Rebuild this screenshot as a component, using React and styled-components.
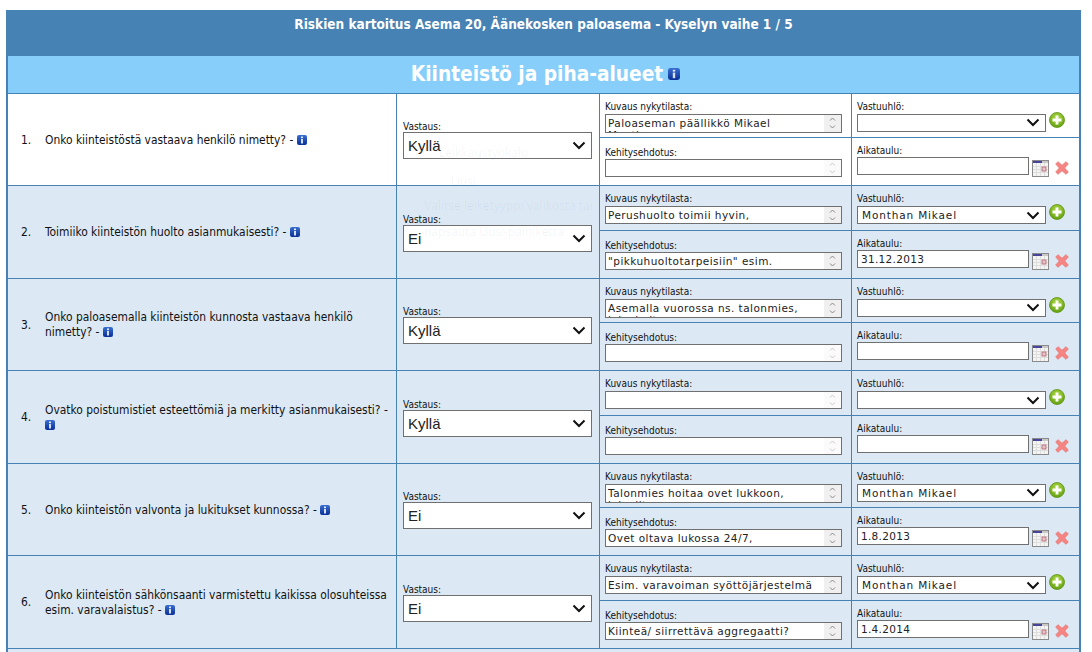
import React from 'react';
import styled, {createGlobalStyle} from 'styled-components';

const LINE = '#4682b4';
const CHEVRON = `url("data:image/svg+xml,%3Csvg xmlns='http://www.w3.org/2000/svg' width='14' height='9'%3E%3Cpath d='M1.5 1.5 7 7l5.5-5.5' fill='none' stroke='%23111' stroke-width='2'/%3E%3C/svg%3E")`;

const GlobalStyle = createGlobalStyle`
  html, body {
    margin: 0;
    height: 652px;
    overflow: hidden;
    background: #fff;
  }
  body {
    font-family: "DejaVu Sans", Verdana, sans-serif;
    font-stretch: condensed;
    color: #111;
  }
`;

// Page frame //
const Page = styled.div`
  position: relative;
  width: 1075px;
  height: 642px;
  overflow: hidden;
  margin: 10px 0 0 6px;
`;

const Header = styled.header`
  height: 46px;
  box-sizing: border-box;
  padding-top: 6px;
  background: ${LINE};
  color: #fff;
  font-size: 13.5px;
  font-weight: 700;
  line-height: 17px;
  text-align: center;
`;

const SectionTitle = styled.h1`
  display: flex;
  align-items: center;
  justify-content: center;
  gap: 5px;
  margin: 0;
  height: 37.5px;
  padding-left: 4px;
  box-sizing: border-box;
  border: solid ${LINE};
  border-width: 0 2px 1px 2px;
  background: #87cefa;
  color: #fff;
  font-size: 20.7px;
  font-weight: 700;
`;

const Table = styled.div`
  border: solid ${LINE};
  border-width: 0 2px;
`;

// Question row //
const Row = styled.section`
  display: grid;
  grid-template-columns: 388px 203px 252px 1fr;
  height: 92.5px;
  box-sizing: border-box;
  border-bottom: 1px solid ${LINE};
  background: ${(p) => (p.$white ? '#fff' : '#dce9f5')};
`;

const Question = styled.div`
  display: flex;
  align-items: center;
  padding: 2px 5px 0 13px;
  font-size: 11.9px;
  line-height: 15px;
`;

const Number = styled.span`
  flex: 0 0 24px;
`;

const AnswerCell = styled.div`
  display: flex;
  flex-direction: column;
  justify-content: center;
  padding: 2px 6px 0 6px;
  border-left: 1px solid ${LINE};
`;

const Stack = styled.div`
  display: grid;
  grid-template-rows: 43.5px 1fr;
  border-left: 1px solid ${LINE};
`;

const SubCell = styled.div`
  padding: ${(p) => p.$top}px 5px 0;
  border-top: ${(p) => (p.$lower ? `1px solid ${LINE}` : '0')};
  box-sizing: border-box;
`;

const Label = styled.label`
  display: block;
  font-size: 10px;
  line-height: ${(p) => p.$line || 13}px;
  margin: 0 0 ${(p) => p.$gap || 0}px;
`;

const BigSelect = styled.select`
  appearance: none;
  width: 189px;
  height: 27px;
  box-sizing: border-box;
  padding: 0 0 0 4px;
  border: 1px solid #707070;
  border-radius: 0;
  background: #fff ${CHEVRON} no-repeat right 5px center;
  font-family: "Liberation Sans", Arial, sans-serif;
  font-size: 15px;
  color: #222;
`;

const SmallSelect = styled.select`
  appearance: none;
  width: 189px;
  height: 18px;
  box-sizing: border-box;
  padding: 0 0 0 4px;
  border: 1px solid #707070;
  border-radius: 0;
  background: #fff ${CHEVRON} no-repeat right 5px center;
  font-family: "DejaVu Sans", Verdana, sans-serif;
  font-size: 10.5px;
  letter-spacing: 0.85px;
  color: #222;
`;

const Inline = styled.div`
  display: flex;
  align-items: flex-start;
  gap: 3px;
`;

const TextBox = styled.div`
  display: flex;
  width: 237px;
  height: ${(p) => (p.$tall ? 19 : 18)}px;
  box-sizing: border-box;
  border: 1px solid #707070;
  background: #fff;
`;

const TextArea = styled.textarea`
  flex: 1;
  min-width: 0;
  margin: 0;
  padding: 2px 2px 0;
  border: 0;
  outline: 0;
  resize: none;
  overflow: hidden;
  background: transparent;
  font-family: "DejaVu Sans", Verdana, sans-serif;
  font-size: 10.5px;
  line-height: 12px;
  letter-spacing: 0.45px;
  color: #222;
`;

const Spinner = styled.div`
  display: flex;
  flex-direction: column;
  align-items: center;
  justify-content: center;
  gap: 4px;
  flex: 0 0 17px;
  background: ${(p) => (p.$off ? '#f8f8f8' : '#f0f0f0')};
  opacity: ${(p) => (p.$off ? 0.45 : 1)};
`;

const DateInput = styled.input`
  width: 172px;
  height: 18px;
  box-sizing: border-box;
  margin: 0;
  padding: 0 3px;
  border: 1px solid #707070;
  border-radius: 0;
  background: #fff;
  font-family: "DejaVu Sans", Verdana, sans-serif;
  font-size: 10.5px;
  letter-spacing: 0.3px;
  color: #222;
`;

const RemoveIcon = styled.svg`
  margin: 4px 0 0 3px;
`;

const CalendarIcon = styled.svg`
  margin-top: 3px;
`;

const PlusIcon = styled.svg`
  margin-top: -2px;
  flex: none;
`;

const Info = styled.svg`
  vertical-align: -1px;
`;

// Faded window that is left over the page in the picture //
const Ghost = styled.div`
  position: absolute;
  left: ${(p) => p.$x}px;
  top: ${(p) => p.$y}px;
  font-family: "Open Sans", sans-serif;
  font-stretch: normal;
  font-size: 12px;
  line-height: 11px;
  white-space: nowrap;
  color: rgba(20, 40, 70, 0.06);
  pointer-events: none;
`;

const InfoIcon = ({size = 10}) => (
  <Info width={size} height={size} viewBox="0 0 10 10">
    <defs>
      <linearGradient id="infoBlue" x1="0" y1="0" x2="0" y2="1">
        <stop offset="0" stopColor="#3a6fd0"/>
        <stop offset="1" stopColor="#0a2f96"/>
      </linearGradient>
    </defs>
    <rect x="0" y="0" width="10" height="10" rx="2" fill="url(#infoBlue)"/>
    <rect x="4" y="1.5" width="2" height="1.5" fill="#e4ecfb"/>
    <rect x="4" y="3.8" width="2" height="4.7" fill="#d5e0f7"/>
  </Info>
);

const SpinUp = () => (
  <svg width="7" height="4"><path d="M1 3.5 3.5 1 6 3.5" fill="none" stroke="#888"/></svg>
);

const SpinDown = () => (
  <svg width="7" height="4"><path d="M1 .5 3.5 3 6 .5" fill="none" stroke="#888"/></svg>
);

const Plus = () => (
  <PlusIcon width="16" height="16" viewBox="0 0 16 16">
    <defs>
      <radialGradient id="plusGreen" cx="0.5" cy="0.35" r="0.7">
        <stop offset="0" stopColor="#b5dc4a"/>
        <stop offset="1" stopColor="#5a9a0c"/>
      </radialGradient>
    </defs>
    <circle cx="8" cy="8" r="7.5" fill="url(#plusGreen)" stroke="#5f9414" strokeWidth="0.8"/>
    <path d="M6.6 3.5h2.8v3.1h3.1v2.8H9.4v3.1H6.6V9.4H3.5V6.6h3.1z" fill="#fff"/>
  </PlusIcon>
);

const Calendar = () => (
  <CalendarIcon width="17" height="17" viewBox="0 0 17 17">
    <rect x="0.5" y="0.5" width="16" height="16" fill="#f4f4f2" stroke="#8a8a8a"/>
    <rect x="1" y="1" width="15" height="2" fill="#c9c9c9"/>
    <rect x="1" y="1" width="9" height="2" fill="#46459a"/>
    <path d="M1 6.5h15M1 9.5h15M1 12.5h15M4.5 3v13M8.5 3v13M12.5 3v13" stroke="#dedede"/>
    <rect x="10" y="7" width="4" height="4" fill="#e6c3c8" stroke="#b5616f" strokeWidth="0.8"/>
  </CalendarIcon>
);

const Remove = () => (
  <RemoveIcon width="14" height="14" viewBox="0 0 14 14">
    <path d="M3 .7 7 4.3 11 .7l2.3 2.3L9.7 7l3.6 4-2.3 2.3L7 9.7l-4 3.6L.7 11l3.6-4L.7 3z" fill="#f58582" stroke="#ea6e6a" strokeWidth="0.7"/>
  </RemoveIcon>
);

const questions = [
  {
    text: 'Onko kiinteistöstä vastaava henkilö nimetty? -',
    answer: 'Kyllä',
    white: true,
    current: 'Paloaseman päällikkö Mikael\nMonthan',
  },
  {
    text: 'Toimiiko kiinteistön huolto asianmukaisesti? -',
    answer: 'Ei',
    current: 'Perushuolto toimii hyvin,',
    idea: '"pikkuhuoltotarpeisiin" esim.',
    owner: 'Monthan Mikael',
    date: '31.12.2013',
  },
  {
    text: 'Onko paloasemalla kiinteistön kunnosta vastaava henkilö nimetty? -',
    answer: 'Kyllä',
    current: 'Asemalla vuorossa ns. talonmies,\njoka hoitaa',
  },
  {
    text: 'Ovatko poistumistiet esteettömiä ja merkitty asianmukaisesti? -',
    answer: 'Kyllä',
  },
  {
    text: 'Onko kiinteistön valvonta ja lukitukset kunnossa? -',
    answer: 'Ei',
    current: 'Talonmies hoitaa ovet lukkoon,\njoka ilta',
    idea: 'Ovet oltava lukossa 24/7,',
    owner: 'Monthan Mikael',
    date: '1.8.2013',
  },
  {
    text: 'Onko kiinteistön sähkönsaanti varmistettu kaikissa olosuhteissa esim. varavalaistus? -',
    answer: 'Ei',
    current: 'Esim. varavoiman syöttöjärjestelmä',
    idea: 'Kiinteä/ siirrettävä aggregaatti?',
    owner: 'Monthan Mikael',
    date: '1.4.2014',
  },
];

/**
 * Textarea with the little scroll arrows next to it.
 * @param {string} value Text in the box.
 * @return {Object} jsx component.
 */
function Memo({value = ''}) {
  return (
    <TextBox $tall={value.includes('\n')}>
      <TextArea rows={1} defaultValue={value}/>
      <Spinner $off={!value}>
        <SpinUp/>
        <SpinDown/>
      </Spinner>
    </TextBox>
  );
}

function QuestionRow({index, item}) {
  return (
    <Row $white={item.white}>
      <Question>
        <Number>{index}.</Number>
        <span>{item.text} <InfoIcon/></span>
      </Question>
      <AnswerCell>
        <Label $line={11}>Vastaus:</Label>
        <BigSelect defaultValue={item.answer}>
          <option>Kyllä</option>
          <option>Ei</option>
        </BigSelect>
      </AnswerCell>
      <Stack>
        <SubCell $top={6}>
          <Label $gap={1}>Kuvaus nykytilasta:</Label>
          <Memo value={item.current}/>
        </SubCell>
        <SubCell $lower $top={8}>
          <Label>Kehitysehdotus:</Label>
          <Memo value={item.idea}/>
        </SubCell>
      </Stack>
      <Stack>
        <SubCell $top={6}>
          <Label $gap={1}>Vastuuhlö:</Label>
          <Inline>
            <SmallSelect defaultValue={item.owner || ''}>
              <option value=""></option>
              <option>Monthan Mikael</option>
            </SmallSelect>
            <Plus/>
          </Inline>
        </SubCell>
        <SubCell $lower $top={6}>
          <Label>Aikataulu:</Label>
          <Inline>
            <DateInput defaultValue={item.date || ''}/>
            <Calendar/>
            <Remove/>
          </Inline>
        </SubCell>
      </Stack>
    </Row>
  );
}

export default function App() {
  return (
    <Page>
      <GlobalStyle/>
      <Header>Riskien kartoitus Asema 20, Äänekosken paloasema - Kyselyn vaihe 1 / 5</Header>
      <SectionTitle>Kiinteistö ja piha-alueet <InfoIcon size={12}/></SectionTitle>
      <Table>
        {questions.map((item, ind) => <QuestionRow key={ind} index={ind + 1} item={item}/>)}
        <Row/>
      </Table>
      <Ghost $x={433} $y={137}>Leikkaustyökalu</Ghost>
      <Ghost $x={445} $y={166}>Uusi</Ghost>
      <Ghost $x={418} $y={190}>Valitse leiketyyppi valikosta tai</Ghost>
      <Ghost $x={418} $y={216}>napsauta Uusi-painiketta</Ghost>
    </Page>
  );
}
